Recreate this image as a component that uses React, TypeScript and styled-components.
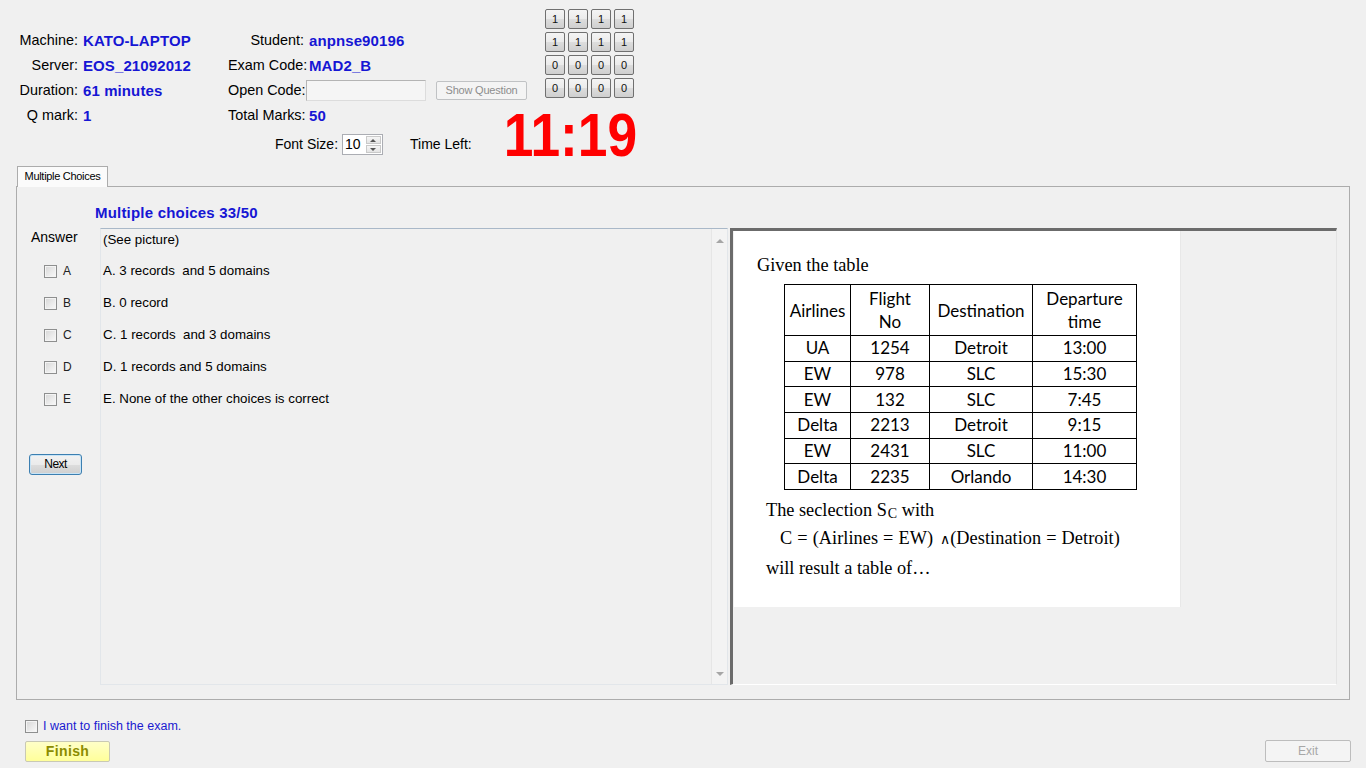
import React from "react";
import styled, { createGlobalStyle } from "styled-components";

const GlobalStyle = createGlobalStyle`
  html, body {
    margin: 0;
    padding: 0;
    background: #f0f0f0;
  }
  body {
    font-family: "Liberation Sans", Arial, sans-serif;
    color: #000;
    overflow: hidden;
  }
  * {
    box-sizing: border-box;
  }
`;

const keys = [
  ["1", "1", "1", "1"],
  ["1", "1", "1", "1"],
  ["0", "0", "0", "0"],
  ["0", "0", "0", "0"],
];

const options = [
  { key: "A", text: "A. 3 records  and 5 domains" },
  { key: "B", text: "B. 0 record" },
  { key: "C", text: "C. 1 records  and 3 domains" },
  { key: "D", text: "D. 1 records and 5 domains" },
  { key: "E", text: "E. None of the other choices is correct" },
];

const flights = [
  ["UA", "1254", "Detroit", "13:00"],
  ["EW", "978", "SLC", "15:30"],
  ["EW", "132", "SLC", "7:45"],
  ["Delta", "2213", "Detroit", "9:15"],
  ["EW", "2431", "SLC", "11:00"],
  ["Delta", "2235", "Orlando", "14:30"],
];

const App: React.FunctionComponent = () => {
  return (
    <Page>
      <GlobalStyle />
      <Header>
        <InfoLabel $row={2} $col={1}>Machine:</InfoLabel>
        <InfoValue $row={2} $col={2}>KATO-LAPTOP</InfoValue>
        <InfoLabel $row={2} $col={3}>Student:</InfoLabel>
        <InfoValue $row={2} $col={4}>anpnse90196</InfoValue>

        <InfoLabel $row={3} $col={1}>Server:</InfoLabel>
        <InfoValue $row={3} $col={2}>EOS_21092012</InfoValue>
        <InfoLabel $row={3} $col={3}>Exam Code:</InfoLabel>
        <InfoValue $row={3} $col={4}>MAD2_B</InfoValue>

        <InfoLabel $row={4} $col={1}>Duration:</InfoLabel>
        <InfoValue $row={4} $col={2}>61 minutes</InfoValue>
        <InfoLabel $row={4} $col={3}>Open Code:</InfoLabel>
        <OpenCodeCell>
          <CodeInput />
          <ShowButton>Show Question</ShowButton>
        </OpenCodeCell>

        <InfoLabel $row={5} $col={1}>Q mark:</InfoLabel>
        <InfoValue $row={5} $col={2}>1</InfoValue>
        <InfoLabel $row={5} $col={3}>Total Marks:</InfoLabel>
        <InfoValue $row={5} $col={4}>50</InfoValue>

        <KeyGrid>
          {keys.flat().map((k, i) => (
            <KeyButton key={i}>{k}</KeyButton>
          ))}
        </KeyGrid>

        <FontRow>
          <span>Font Size:</span>
          <SpinBox>
            <SpinValue>10</SpinValue>
            <SpinButtons>
              <SpinArrow $up />
              <SpinArrow />
            </SpinButtons>
          </SpinBox>
          <TimeLabel>Time Left:</TimeLabel>
        </FontRow>

        <Timer>11:19</Timer>
      </Header>

      <TabArea>
        <TabStrip>
          <Tab>Multiple Choices</Tab>
        </TabStrip>
        <TabPanel>
          <QuestionTitle>Multiple choices 33/50</QuestionTitle>
          <ContentRow>
            <AnswerColumn>
              <AnswerLabel>Answer</AnswerLabel>
              {options.map((o) => (
                <AnswerRow key={o.key}>
                  <CheckBox />
                  <span>{o.key}</span>
                </AnswerRow>
              ))}
              <NextButton>Next</NextButton>
            </AnswerColumn>

            <QuestionBox>
              <QuestionText>
                <FirstLine>(See picture)</FirstLine>
                {options.map((o) => (
                  <OptionLine key={o.key}>{o.text}</OptionLine>
                ))}
              </QuestionText>
              <ScrollBar>
                <ScrollArrow $up />
                <ScrollArrow />
              </ScrollBar>
            </QuestionBox>

            <PicturePanel>
              <Picture>
                <SerifLine $indent={23} $top={20}>
                  Given the table
                </SerifLine>
                <FlightTable>
                  <colgroup>
                    <col style={{ width: 66 }} />
                    <col style={{ width: 79 }} />
                    <col style={{ width: 103 }} />
                    <col style={{ width: 104 }} />
                  </colgroup>
                  <thead>
                    <tr>
                      <HeadCell>Airlines</HeadCell>
                      <HeadCell>
                        Flight
                        <br />
                        No
                      </HeadCell>
                      <HeadCell>Destination</HeadCell>
                      <HeadCell>
                        Departure
                        <br />
                        time
                      </HeadCell>
                    </tr>
                  </thead>
                  <tbody>
                    {flights.map((row, i) => (
                      <tr key={i}>
                        {row.map((c, j) => (
                          <Cell key={j}>{c}</Cell>
                        ))}
                      </tr>
                    ))}
                  </tbody>
                </FlightTable>
                <SerifLine $indent={32} $top={6}>
                  The seclection S<Sub>C</Sub> with
                </SerifLine>
                <SerifLine $indent={46} $top={0} $spread>
                  C = (Airlines = EW) <AndSign>∧</AndSign>(Destination = Detroit)
                </SerifLine>
                <SerifLine $indent={32} $top={2}>
                  will result a table of…
                </SerifLine>
              </Picture>
            </PicturePanel>
          </ContentRow>
        </TabPanel>
      </TabArea>

      <Footer>
        <FinishCheckRow>
          <CheckBox />
          <span>I want to finish the exam.</span>
        </FinishCheckRow>
        <ButtonRow>
          <FinishButton>Finish</FinishButton>
          <ExitButton>Exit</ExitButton>
        </ButtonRow>
      </Footer>
    </Page>
  );
};

export default App;

const Page = styled.div`
  width: 1366px;
  height: 768px;
  display: flex;
  flex-direction: column;
`;

const Header = styled.div`
  display: grid;
  grid-template-columns: 80px 148px 78px 239px 92px;
  grid-template-rows: 28px repeat(4, 25px) 32px;
  font-size: 14px;
`;

const InfoLabel = styled.span<{ $row: number; $col: number }>`
  grid-row: ${(p) => p.$row};
  grid-column: ${(p) => p.$col};
  align-self: center;
  text-align: right;
  white-space: nowrap;
  line-height: 17px;
  font-size: 14.4px;
  padding-right: 2px;
`;

const InfoValue = styled.span<{ $row: number; $col: number }>`
  grid-row: ${(p) => p.$row};
  grid-column: ${(p) => p.$col};
  align-self: center;
  padding-left: 3px;
  white-space: nowrap;
  line-height: 17px;
  color: #1616d4;
  font-size: 15px;
  font-weight: bold;
  letter-spacing: 0.1px;
  margin-top: -1px;
`;

const OpenCodeCell = styled.div`
  grid-row: 4;
  grid-column: 4;
  display: flex;
  align-items: center;
  gap: 10px;
`;

const CodeInput = styled.div`
  width: 120px;
  height: 21px;
  border: 1px solid #b4b4b4;
  border-right-color: #dcdcdc;
  border-bottom-color: #dcdcdc;
  background: #f5f5f5;
  margin-top: -1px;
`;

const ShowButton = styled.div`
  width: 91px;
  height: 19px;
  border: 1px solid #c0c2c4;
  border-radius: 2px;
  background: #f4f4f4;
  color: #8d8d8d;
  font-size: 11px;
  letter-spacing: -0.2px;
  line-height: 17px;
  text-align: center;
`;

const KeyGrid = styled.div`
  grid-row: 1 / 6;
  grid-column: 5;
  align-self: start;
  margin-top: 9px;
  display: grid;
  grid-template-columns: repeat(4, 20px);
  grid-auto-rows: 20px;
  gap: 3px;
`;

const KeyButton = styled.div`
  border: 1px solid #707070;
  border-radius: 2px;
  background: linear-gradient(#f4f4f4 0%, #ebebeb 50%, #dddddd 51%, #cfcfcf 100%);
  font-size: 11px;
  line-height: 18px;
  text-align: center;
  color: #111;
`;

const FontRow = styled.div`
  grid-row: 6;
  grid-column: 3 / 5;
  display: flex;
  align-items: center;
  padding-left: 47px;
  white-space: nowrap;
`;

const SpinBox = styled.div`
  margin-left: 4px;
  width: 41px;
  height: 21px;
  border: 1px solid #abadb3;
  background: #fff;
  display: flex;
`;

const SpinValue = styled.span`
  flex: 1;
  padding-left: 2px;
  line-height: 19px;
`;

const SpinButtons = styled.div`
  width: 16px;
  display: flex;
  flex-direction: column;
  gap: 1px;
  padding: 1px 1px 1px 0;
`;

const SpinArrow = styled.div<{ $up?: boolean }>`
  flex: 1;
  border: 1px solid #c9c9c9;
  background: linear-gradient(#f6f6f6, #e4e4e4);
  position: relative;
  &::after {
    content: "";
    position: absolute;
    left: 3px;
    top: 2px;
    border-left: 3px solid transparent;
    border-right: 3px solid transparent;
    ${(p) =>
      p.$up ? "border-bottom: 3px solid #555;" : "border-top: 3px solid #555;"}
  }
`;

const TimeLabel = styled.span`
  margin-left: 27px;
`;

const Timer = styled.div`
  grid-row: 5 / 7;
  grid-column: 4 / 6;
  justify-self: end;
  align-self: end;
  font-size: 62px;
  line-height: 50px;
  font-weight: bold;
  color: #ff0000;
  transform: scaleX(0.86);
  transform-origin: right center;
`;

const TabArea = styled.div`
  margin: 6px 16px 0 16px;
`;

const TabStrip = styled.div`
  display: flex;
  padding-left: 1px;
`;

const Tab = styled.div`
  position: relative;
  z-index: 1;
  width: 91px;
  height: 21px;
  margin-bottom: -1px;
  border: 1px solid #acacac;
  border-bottom: none;
  background: #fbfbfb;
  font-size: 11px;
  letter-spacing: -0.3px;
  line-height: 19px;
  text-align: center;
`;

const TabPanel = styled.div`
  height: 514px;
  border: 1px solid #acacac;
  padding-top: 17px;
`;

const QuestionTitle = styled.div`
  padding-left: 78px;
  font-size: 15px;
  line-height: 17px;
  font-weight: bold;
  letter-spacing: 0.2px;
  color: #1616d4;
  margin-bottom: 7px;
`;

const ContentRow = styled.div`
  display: flex;
  height: 457px;
  margin-right: 12px;
`;

const AnswerColumn = styled.div`
  width: 83px;
  display: flex;
  flex-direction: column;
`;

const AnswerLabel = styled.div`
  padding-left: 14px;
  font-size: 14px;
  line-height: 18px;
  margin-bottom: 9px;
`;

const AnswerRow = styled.div`
  height: 32px;
  display: flex;
  align-items: center;
  gap: 6px;
  padding-left: 27px;
  font-size: 12px;
  color: #222;
`;

const CheckBox = styled.span`
  display: inline-block;
  width: 13px;
  height: 13px;
  border: 1px solid #8e8f8f;
  background: linear-gradient(135deg, #d6d6d6 0%, #ececec 60%, #fafafa 100%);
  box-shadow: inset 0 0 0 1px #f4f4f4;
  flex-shrink: 0;
`;

const NextButton = styled.div`
  margin: 39px 0 0 12px;
  width: 53px;
  height: 21px;
  border: 1px solid #3c7fb1;
  border-radius: 3px;
  background: linear-gradient(#f2f2f2 0%, #ebebeb 50%, #dddddd 51%, #cfcfcf 100%);
  box-shadow: inset 0 0 0 1px #c8e4f6;
  font-size: 12px;
  letter-spacing: -0.6px;
  line-height: 19px;
  text-align: center;
`;

const QuestionBox = styled.div`
  width: 628px;
  display: flex;
  border: 1px solid #e2e6ea;
  border-top-color: #a9b8c8;
  background: #f0f0f0;
`;

const QuestionText = styled.div`
  flex: 1;
  padding: 3px 0 0 2px;
  font-size: 13.33px;
`;

const FirstLine = styled.div`
  line-height: 16px;
  margin-bottom: 7px;
`;

const OptionLine = styled.div`
  line-height: 32px;
  white-space: pre;
`;

const ScrollBar = styled.div`
  width: 16px;
  display: flex;
  flex-direction: column;
  justify-content: space-between;
  align-items: center;
  padding: 10px 0 8px;
  border-left: 1px solid #e6e6e6;
  background: #f3f3f3;
`;

const ScrollArrow = styled.div<{ $up?: boolean }>`
  width: 0;
  height: 0;
  border-left: 4px solid transparent;
  border-right: 4px solid transparent;
  ${(p) =>
    p.$up ? "border-bottom: 4px solid #a6a6a6;" : "border-top: 4px solid #a6a6a6;"}
`;

const PicturePanel = styled.div`
  flex: 1;
  margin-left: 2px;
  border-top: 3px solid #6b6b6b;
  border-left: 3px solid #6b6b6b;
  border-right: 1px solid #e4e4e4;
  border-bottom: 1px solid #ffffff;
  padding-left: 1px;
  background: #f0f0f0;
`;

const Picture = styled.div`
  width: 447px;
  height: 376px;
  background: #fff;
  border-right: 1px solid #e8e8e8;
  display: flex;
  flex-direction: column;
  font-family: "Liberation Serif", "Times New Roman", serif;
  font-size: 18.3px;
`;

const SerifLine = styled.div<{ $indent: number; $top: number; $spread?: boolean }>`
  padding-left: ${(p) => p.$indent}px;
  margin-top: ${(p) => p.$top}px;
  height: 28px;
  line-height: 28px;
  white-space: nowrap;
  word-spacing: ${(p) => (p.$spread ? "0.4px" : "0")};
  letter-spacing: ${(p) => (p.$spread ? "0.05px" : "0")};
`;

const Sub = styled.span`
  font-size: 14px;
  line-height: 0;
  vertical-align: -2px;
  margin-left: 1px;
`;

const AndSign = styled.span`
  font-size: 14px;
  line-height: 0;
  margin-left: 2px;
`;

const FlightTable = styled.table`
  margin: 5px 0 0 50px;
  width: 352px;
  border-collapse: collapse;
  table-layout: fixed;
  font-family: Lato, "Noto Sans", sans-serif;
  font-size: 17px;
`;

const HeadCell = styled.th`
  height: 51px;
  border: 1px solid #000;
  font-weight: normal;
  line-height: 23px;
  padding: 0;
`;

const Cell = styled.td`
  height: 25.7px;
  border: 1px solid #000;
  text-align: center;
  padding: 0;
  line-height: 20px;
`;

const Footer = styled.div`
  margin-top: 19px;
  padding: 0 15px 0 25px;
`;

const FinishCheckRow = styled.div`
  display: flex;
  align-items: center;
  gap: 5px;
  height: 14px;
  font-size: 12.5px;
  color: #1a1ad0;
`;

const ButtonRow = styled.div`
  margin-top: 7px;
  display: flex;
  justify-content: space-between;
  align-items: flex-start;
`;

const FinishButton = styled.div`
  margin-top: 1px;
  width: 85px;
  height: 21px;
  border: 1px solid #c9c9b4;
  border-radius: 2px;
  background: linear-gradient(#ffffc8, #ffff9a);
  color: #8c8c00;
  font-size: 14px;
  font-weight: bold;
  letter-spacing: 0.4px;
  line-height: 19px;
  text-align: center;
`;

const ExitButton = styled.div`
  width: 86px;
  height: 22px;
  border: 1px solid #bdbdbd;
  border-radius: 2px;
  background: #f4f4f4;
  color: #a7a7a7;
  font-size: 12px;
  line-height: 20px;
  text-align: center;
`;
